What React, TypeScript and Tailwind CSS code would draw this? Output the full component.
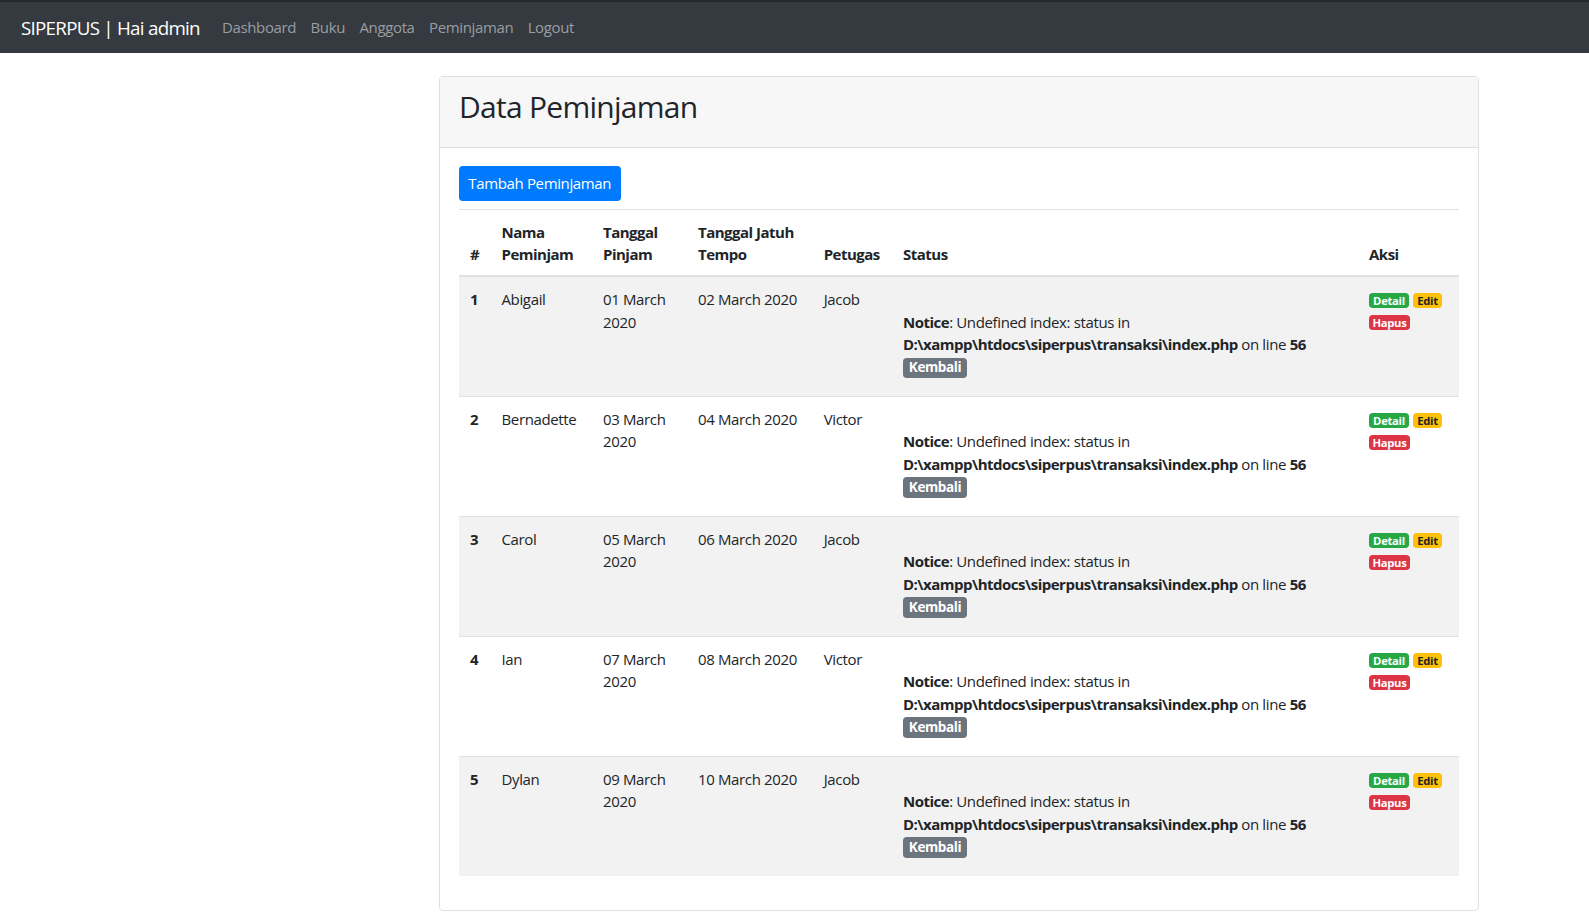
import React from "react";

const rows = [
  { no: 1, nama: "Abigail", pinjam: "01 March 2020", tempo: "02 March 2020", petugas: "Jacob" },
  { no: 2, nama: "Bernadette", pinjam: "03 March 2020", tempo: "04 March 2020", petugas: "Victor" },
  { no: 3, nama: "Carol", pinjam: "05 March 2020", tempo: "06 March 2020", petugas: "Jacob" },
  { no: 4, nama: "Ian", pinjam: "07 March 2020", tempo: "08 March 2020", petugas: "Victor" },
  { no: 5, nama: "Dylan", pinjam: "09 March 2020", tempo: "10 March 2020", petugas: "Jacob" },
];

const navLinks = ["Dashboard", "Buku", "Anggota", "Peminjaman", "Logout"];

const cell = "px-[11.25px] pt-[11.25px] align-top border-t border-[#dee2e6]";
const head =
  "px-[11.25px] pt-[11px] pb-[9.5px] align-bottom text-left font-bold tracking-[-0.5px] border-t border-b-2 border-[#dee2e6]";

function Badge({ color, width, children }: { color: string; width: string; children: React.ReactNode }) {
  return (
    <span
      className={`inline-flex h-[15px] items-center justify-center rounded-[3.75px] text-[11.25px] font-bold leading-none tracking-[-0.3px] ${color} ${width}`}
    >
      {children}
    </span>
  );
}

export default function App() {
  return (
    <div className="min-h-screen bg-white font-['Open_Sans',sans-serif] text-[15px] leading-[22.5px] tracking-[-0.36px] text-[#212529]">
      {/* Navbar */}
      <nav className="flex h-[53px] items-center border-t-2 border-[#25292d] bg-[#343a40] px-[21px]">
        <span className="mr-[15px] text-[18.75px] leading-[28px] tracking-[-0.73px] text-white">
          SIPERPUS | Hai admin
        </span>
        <div className="flex">
          {navLinks.map((l) => (
            <a key={l} href="#" className="px-[7.2px] text-[15px] text-[#9a9da0]">
              {l}
            </a>
          ))}
        </div>
      </nav>

      {/* Card */}
      <div className="ml-[439px] mt-[23px] w-[1040px] rounded-[4px] border border-[#dfdfdf]">
        <div className="h-[71px] border-b border-[#dfdfdf] bg-[#f7f7f7] px-[19px] pt-[12px]">
          <h2 className="text-[30px] font-medium leading-[36px] tracking-[-0.73px]">Data Peminjaman</h2>
        </div>

        <div className="px-[18.75px] pb-[34px] pt-[18px]">
          <button className="mb-[7.5px] flex h-[35px] w-[162px] items-center justify-center rounded-[3.75px] bg-[#007bff] text-[15px] text-white">
            Tambah Peminjaman
          </button>

          <table className="w-[1000px] table-fixed border-collapse">
            <colgroup>
              <col className="w-[31.5px]" />
              <col className="w-[101.5px]" />
              <col className="w-[95px]" />
              <col className="w-[125.7px]" />
              <col className="w-[79.3px]" />
              <col className="w-[466px]" />
              <col className="w-[101px]" />
            </colgroup>
            <thead>
              <tr>
                <th className={head}>#</th>
                <th className={head}>Nama Peminjam</th>
                <th className={head}>Tanggal Pinjam</th>
                <th className={head}>Tanggal Jatuh Tempo</th>
                <th className={head}>Petugas</th>
                <th className={head}>Status</th>
                <th className={head}>Aksi</th>
              </tr>
            </thead>
            <tbody>
              {rows.map((r, i) => (
                <tr key={r.no} className={`h-[120px] ${i % 2 === 0 ? "bg-[#f2f2f2]" : ""}`}>
                  <td className={`${cell} font-bold`}>{r.no}</td>
                  <td className={cell}>{r.nama}</td>
                  <td className={cell}>{r.pinjam}</td>
                  <td className={cell}>{r.tempo}</td>
                  <td className={cell}>{r.petugas}</td>
                  <td className={cell}>
                    <br />
                    <b className="tracking-[-0.5px]">Notice</b>: Undefined index: status in{" "}
                    <b className="tracking-[-0.5px]">{"D:\\xampp\\htdocs\\siperpus\\transaksi\\index.php"}</b> on line{" "}
                    <b className="tracking-[-0.5px]">56</b>
                    <br />
                    <span className="mt-[2px] inline-flex h-[20.5px] w-[64px] items-center justify-center rounded-[3.75px] bg-[#6c757d] align-top text-[13.5px] font-bold leading-none tracking-[-0.4px] text-white">
                      Kembali
                    </span>
                  </td>
                  <td className={cell}>
                    <div className="flex flex-col gap-[7px] pt-[5px]">
                      <div className="flex gap-[4px]">
                        <Badge color="bg-[#28a745] text-white" width="w-[40px]">
                          Detail
                        </Badge>
                        <Badge color="bg-[#ffc107] text-[#212529]" width="w-[29px]">
                          Edit
                        </Badge>
                      </div>
                      <div className="flex">
                        <Badge color="bg-[#dc3545] text-white" width="w-[41px]">
                          Hapus
                        </Badge>
                      </div>
                    </div>
                  </td>
                </tr>
              ))}
            </tbody>
          </table>
        </div>
      </div>
    </div>
  );
}
